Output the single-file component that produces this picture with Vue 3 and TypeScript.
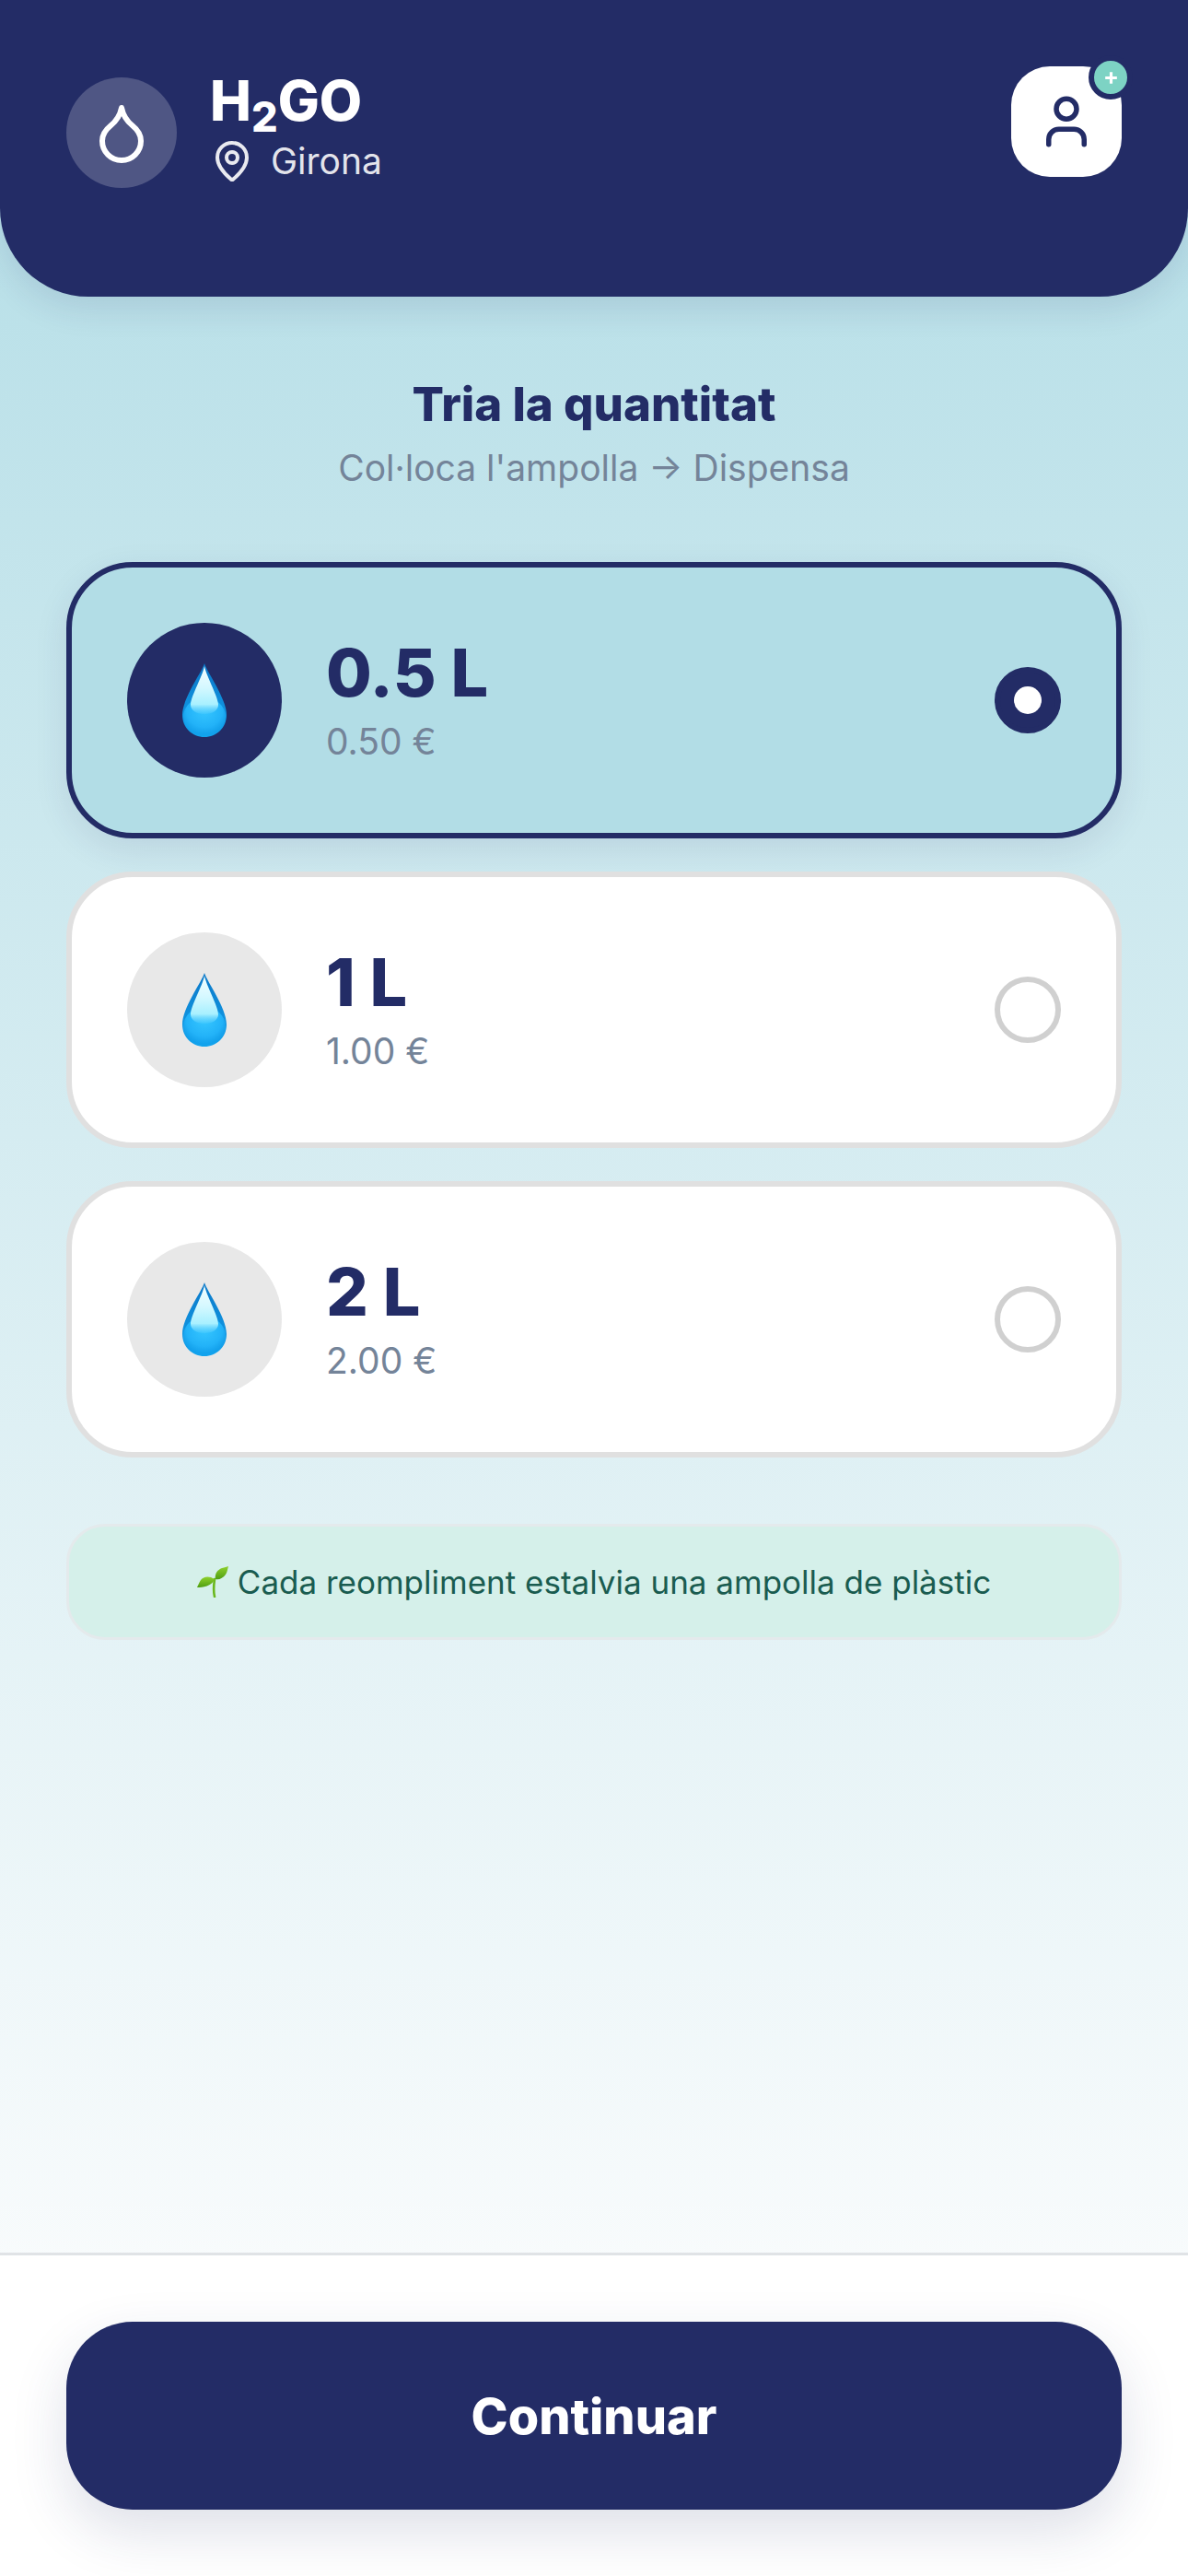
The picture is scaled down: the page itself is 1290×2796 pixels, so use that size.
<script setup lang="ts">
interface Option { volume: string; price: string; selected: boolean }
const options: Option[] = [
  { volume: '0.5 L', price: '0.50 €', selected: true },
  { volume: '1 L', price: '1.00 €', selected: false },
  { volume: '2 L', price: '2.00 €', selected: false },
]
</script>

<template>
  <div class="page">
    <header class="header">
      <div class="brand">
        <div class="logo">
          <svg class="logo-icon" viewBox="0 0 24 24" fill="none" stroke="#fff" stroke-width="2" stroke-linecap="round" stroke-linejoin="round">
            <path d="M12 22a7 7 0 0 0 7-7c0-2-1-3.9-3-5.5s-3.5-4-4-6.5c-.5 2.5-2 4.9-4 6.5C6 11.1 5 13 5 15a7 7 0 0 0 7 7z" />
          </svg>
        </div>
        <div class="brand-text">
          <div class="name">H<sub>2</sub>GO</div>
          <div class="place">
            <svg class="pin" viewBox="0 0 24 24" fill="none" stroke="currentColor" stroke-width="2" stroke-linecap="round" stroke-linejoin="round">
              <path d="M20 10c0 4.993-5.539 10.193-7.399 11.799a1 1 0 0 1-1.202 0C9.539 20.193 4 14.993 4 10a8 8 0 0 1 16 0" />
              <circle cx="12" cy="10" r="3" />
            </svg>
            <span>Girona</span>
          </div>
        </div>
      </div>
      <div class="profile">
        <svg class="user" viewBox="0 0 24 24" fill="none" stroke="#232c66" stroke-width="2" stroke-linecap="round" stroke-linejoin="round">
          <path d="M19 21v-2a4 4 0 0 0-4-4H9a4 4 0 0 0-4 4v2" />
          <circle cx="12" cy="7" r="4" />
        </svg>
        <span class="badge">
          <svg class="plus" viewBox="0 0 24 24" fill="none" stroke="#fff" stroke-width="4" stroke-linecap="butt">
            <path d="M4 12h16M12 4v16" />
          </svg>
        </span>
      </div>
    </header>

    <main class="main">
      <h1 class="title">Tria la quantitat</h1>
      <p class="subtitle">Col·loca l'ampolla → Dispensa</p>

      <div class="cards">
        <div v-for="(o, i) in options" :key="o.volume" class="card" :class="{ selected: o.selected }">
          <div class="circle">
            <svg class="drop" viewBox="0 0 48 80">
              <defs>
                <linearGradient :id="`base${i}`" x1="0" y1="0" x2="0" y2="1">
                  <stop offset="0" stop-color="#0b78c8" />
                  <stop offset="0.55" stop-color="#0f8fdc" />
                  <stop offset="1" stop-color="#12a4ee" />
                </linearGradient>
                <radialGradient :id="`glow${i}`" cx="0.5" cy="0.35" r="0.6">
                  <stop offset="0" stop-color="#36c6ff" />
                  <stop offset="0.7" stop-color="#22b2f8" />
                  <stop offset="1" stop-color="#22b2f8" stop-opacity="0" />
                </radialGradient>
                <linearGradient :id="`shine${i}`" x1="0" y1="0" x2="0" y2="1">
                  <stop offset="0" stop-color="#f4feff" />
                  <stop offset="0.45" stop-color="#d4f8ff" />
                  <stop offset="0.8" stop-color="#a8f0ff" />
                  <stop offset="1" stop-color="#6fd8ff" stop-opacity="0.2" />
                </linearGradient>
              </defs>
              <path :fill="`url(#base${i})`" d="M24 0C21 10 0 38 0 56c0 14 11 24 24 24s24-10 24-24C48 38 27 10 24 0z" />
              <ellipse :fill="`url(#glow${i})`" cx="24" cy="58" rx="23" ry="21" />
              <path :fill="`url(#shine${i})`" d="M24 3C22 14 9 36 9 45c0 6 6 10 15 10s15-4 15-10C39 36 26 14 24 3z" />
            </svg>
          </div>
          <div class="info">
            <div class="volume">{{ o.volume }}</div>
            <div class="price">{{ o.price }}</div>
          </div>
          <div class="radio"><span v-if="o.selected" class="dot"></span></div>
        </div>
      </div>

      <div class="tip">
        <svg class="sprout" viewBox="0 0 34 34">
          <defs>
            <linearGradient id="leaf" x1="0" y1="0" x2="0" y2="1">
              <stop offset="0" stop-color="#8fd12c" />
              <stop offset="1" stop-color="#4f9e12" />
            </linearGradient>
          </defs>
          <path d="M19 33c-1-4-1-12 0-19" fill="none" stroke="#6ab81e" stroke-width="2.6" stroke-linecap="round" />
          <path fill="url(#leaf)" d="M19 14C13 10 7 11 4 15 2 18 1 21 0 23c6 0 16-1 19-9z" />
          <path fill="url(#leaf)" d="M20 14c-1-6 2-10 7-12 3-1 5-1 7-2-1 3-1 6-3 9-3 4-7 6-11 5z" />
        </svg>
        <span>Cada reompliment estalvia una ampolla de plàstic</span>
      </div>
    </main>

    <footer class="footer">
      <button class="cta" type="button">Continuar</button>
    </footer>
  </div>
</template>

<style>
html, body { margin: 0; }
</style>

<style scoped>
.page {
  width: 1290px;
  height: 2796px;
  display: flex;
  flex-direction: column;
  font-family: Inter, "Noto Sans", sans-serif;
  background: linear-gradient(180deg, #b2dde6 0%, #f8fbfc 88%);
  overflow: hidden;
}
.header {
  height: 322px;
  box-sizing: border-box;
  padding: 72px 72px 0;
  flex: none;
  display: flex;
  justify-content: space-between;
  align-items: flex-start;
  background: #232c66;
  border-radius: 0 0 96px 96px;
  box-shadow: 0 12px 36px rgba(35, 44, 102, 0.12);
}
.brand { display: flex; gap: 36px; align-items: center; margin-top: 12px; height: 120px; }
.logo {
  width: 120px;
  height: 120px;
  border-radius: 50%;
  background: rgba(255, 255, 255, 0.2);
  display: flex;
  align-items: center;
  justify-content: center;
}
.logo-icon { width: 72px; height: 72px; }
.brand-text { display: flex; flex-direction: column; }
.name {
  font-size: 60px;
  font-weight: 800;
  line-height: 72px;
  color: #fff;
  margin-top: -16px;
}
.name sub { font-size: 45px; line-height: 0; vertical-align: -12px; }
.place {
  display: flex;
  align-items: center;
  gap: 18px;
  font-size: 39px;
  line-height: 48px;
  color: rgba(255, 255, 255, 0.9);
  margin-top: 6px;
}
.pin { width: 48px; height: 48px; }
.profile {
  position: relative;
  width: 120px;
  height: 120px;
  border-radius: 42px;
  background: #fff;
  display: flex;
  align-items: center;
  justify-content: center;
}
.user { width: 66px; height: 66px; }
.badge {
  position: absolute;
  top: -12px;
  right: -12px;
  width: 36px;
  height: 36px;
  border: 6px solid #232c66;
  border-radius: 50%;
  background: #7dd3c4;
  display: flex;
  align-items: center;
  justify-content: center;
}
.plus { width: 19px; height: 19px; }
.main {
  flex: 1;
  padding: 84px 72px 0;
  display: flex;
  flex-direction: column;
}
.title {
  margin: 0;
  font-size: 51px;
  line-height: 66px;
  font-weight: 800;
  color: #232c66;
  text-align: center;
}
.subtitle {
  margin: 6px 0 0;
  font-size: 39px;
  line-height: 60px;
  color: #748499;
  text-align: center;
}
.cards { margin-top: 72px; display: flex; flex-direction: column; gap: 36px; }
.card {
  box-sizing: border-box;
  height: 300px;
  padding: 0 60px;
  display: flex;
  align-items: center;
  gap: 48px;
  background: #fff;
  border: 6px solid #e0e0e0;
  border-radius: 72px;
}
.card.selected {
  background: #b2dde6;
  border-color: #232c66;
  box-shadow: 0 12px 36px rgba(35, 44, 102, 0.1);
}
.circle {
  width: 168px;
  height: 168px;
  border-radius: 50%;
  background: #e8e8e8;
  display: flex;
  align-items: center;
  justify-content: center;
  flex: none;
}
.selected .circle { background: #232c66; }
.drop { width: 48px; height: 80px; }
.info { flex: 1; display: flex; flex-direction: column; gap: 6px; }
.volume { font-size: 72px; line-height: 84px; font-weight: 800; color: #232c66; }
.price { font-size: 39px; line-height: 54px; color: #748499; }
.radio {
  box-sizing: border-box;
  width: 72px;
  height: 72px;
  border-radius: 50%;
  border: 6px solid #d0d0d0;
  display: flex;
  align-items: center;
  justify-content: center;
}
.selected .radio { background: #232c66; border-color: #232c66; }
.dot { width: 30px; height: 30px; border-radius: 50%; background: #fff; }
.tip {
  box-sizing: border-box;
  margin-top: 72px;
  height: 126px;
  display: flex;
  align-items: center;
  justify-content: center;
  gap: 10px;
  background: #d5f0ea;
  border: 3px solid #e4eaec;
  border-radius: 42px;
  font-size: 35px;
  color: #1a5c50;
}
.sprout { width: 34px; height: 34px; flex: none; }
.footer {
  flex: none;
  box-sizing: border-box;
  height: 351px;
  padding: 72px 72px 0;
  background: #fff;
  border-top: 3px solid #e0e3e6;
}
.cta {
  display: block;
  width: 100%;
  height: 204px;
  border: 0;
  border-radius: 72px;
  background: #232c66;
  color: #fff;
  font-family: inherit;
  font-size: 54px;
  font-weight: 800;
  box-shadow: 0 24px 60px rgba(35, 44, 102, 0.15);
}
</style>
